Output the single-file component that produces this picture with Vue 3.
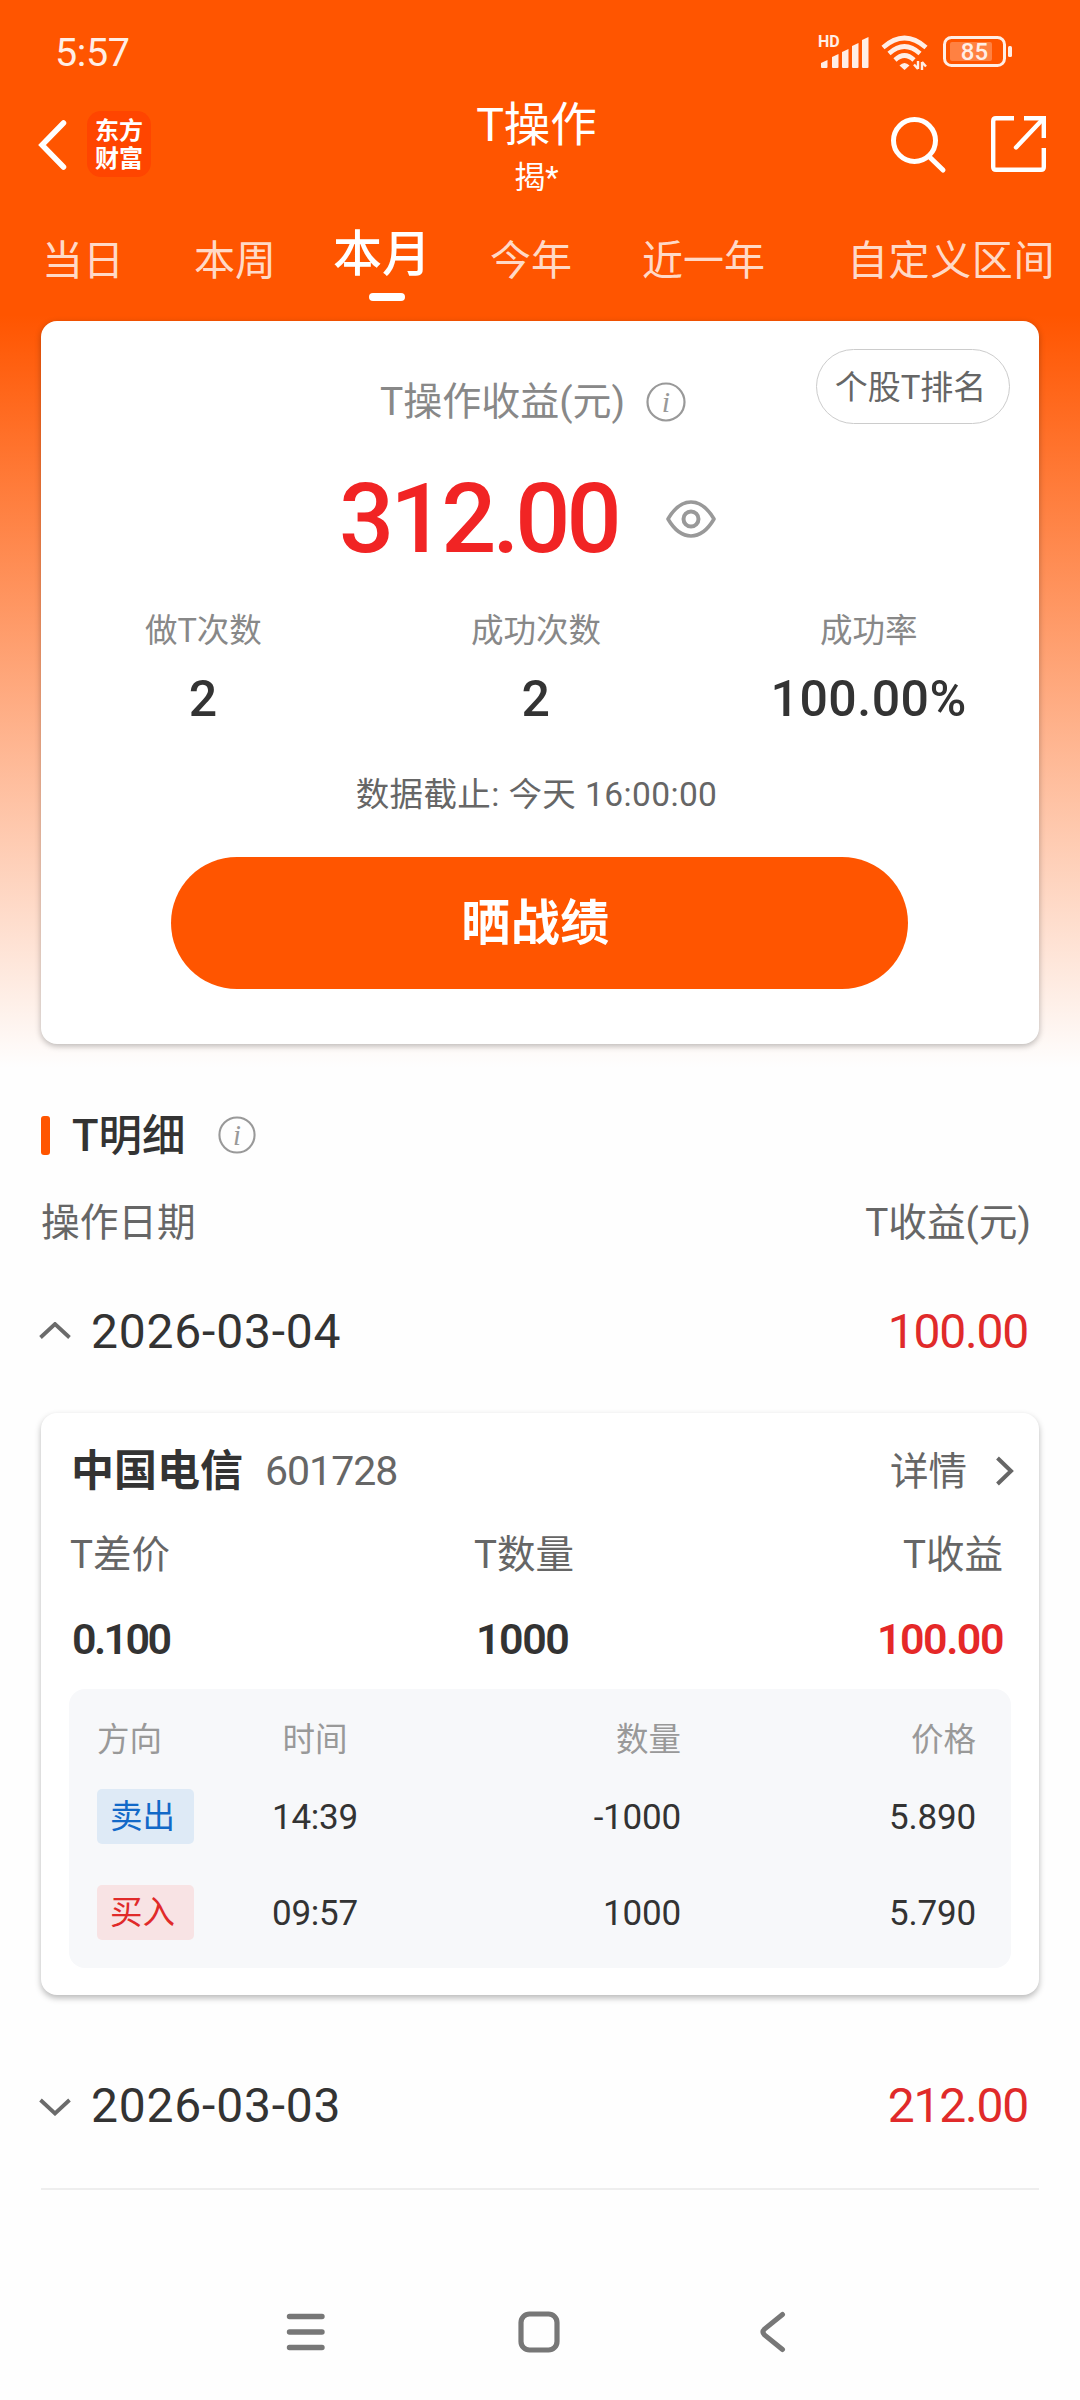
<script setup>
import { ref } from 'vue';

const tabs = [
  { id: 'day', label: '当日' },
  { id: 'week', label: '本周' },
  { id: 'month', label: '本月' },
  { id: 'year', label: '今年' },
  { id: 'last-year', label: '近一年' },
  { id: 'custom', label: '自定义区间' },
];
const activeTab = ref('month');

const stats = [
  { label: '做T次数', value: '2' },
  { label: '成功次数', value: '2' },
  { label: '成功率', value: '100.00%' },
];

// One entry per trading day; `stocks` is only rendered while the day is open.
const days = ref([
  {
    date: '2026-03-04',
    profit: '100.00',
    open: true,
    stocks: [
      {
        name: '中国电信',
        code: '601728',
        spread: '0.100',
        amount: '1000',
        profit: '100.00',
        trades: [
          { side: 'sell', label: '卖出', time: '14:39', amount: '-1000', price: '5.890' },
          { side: 'buy', label: '买入', time: '09:57', amount: '1000', price: '5.790' },
        ],
      },
    ],
  },
  { date: '2026-03-03', profit: '212.00', open: false, stocks: [] },
]);

// Left x, top y and height of each signal bar.
const bars = [
  [2, 24, 8],
  [13, 18, 14],
  [23, 13, 19],
  [33, 7, 25],
  [43, 1, 31],
];
</script>

<template>
  <div class="page">
    <header class="top">
      <div class="status">
        <span class="clock">5:57</span>
        <div class="status__icons">
          <div class="signal">
            <span class="signal__hd">HD</span>
            <svg width="52" height="34" viewBox="0 0 52 34">
              <path
                v-for="[x, y, h] in bars"
                :key="x"
                :d="`M${x} ${y + 3}l6.5 -3v${h - 1}q0 1 -1 1h-4.5q-1 0 -1 -1z`"
                fill="#ffeee6"
              />
            </svg>
          </div>
          <svg class="wifi" width="48" height="36" viewBox="0 0 48 36">
            <g fill="none" stroke="#ffeee6" stroke-width="4.6">
              <path d="M2 12.5Q23.5 -6.5 45 12.5" />
              <path d="M8 18.5Q23.5 4.5 39 18.5" />
              <path d="M14 25Q23.5 16 33 25" />
            </g>
            <path d="M18.5 30.5Q23.5 25.5 28.5 30.5L23.5 35z" fill="#ffeee6" />
            <path d="M37 26v8M33 29.5l4 4.5M41 35v-8M41 27l4 4.5" stroke="#ffeee6" stroke-width="2.4" fill="none" />
          </svg>
          <div class="battery">
            <svg width="70" height="32" viewBox="0 0 70 32">
              <rect x="1.5" y="1.5" width="60" height="28" rx="7" fill="none" stroke="#ffeee6" stroke-width="3" />
              <rect x="7" y="6" width="42" height="19" rx="2" fill="#ff8142" />
              <rect x="65" y="10" width="4" height="11" rx="1.5" fill="#ffeee6" />
            </svg>
            <span class="battery__level">85</span>
          </div>
        </div>
      </div>

      <div class="nav">
        <div class="nav__left">
          <svg width="30" height="50" viewBox="0 0 30 50">
            <path d="M25.5 3L4 25L25.5 47" fill="none" stroke="#fff" stroke-width="5.5" stroke-linecap="round" />
          </svg>
          <div class="logo"><span>东方</span><span>财富</span></div>
        </div>
        <div class="nav__title">
          <h1>T操作</h1>
          <p>揭*</p>
        </div>
        <div class="nav__right">
          <svg width="58" height="58" viewBox="0 0 58 58">
            <circle cx="24.5" cy="24.5" r="21" fill="none" stroke="#fff" stroke-width="5" />
            <path d="M39 40.5L53 54" stroke="#fff" stroke-width="5" stroke-linecap="round" />
          </svg>
          <svg width="56" height="56" viewBox="0 0 56 56">
            <g fill="none" stroke="#fff" stroke-width="4.4">
              <path d="M23 2.2H5Q2.2 2.2 2.2 5V51Q2.2 53.8 5 53.8H50Q52.8 53.8 52.8 51V32" />
              <path d="M33 2.2H52.8V22" />
              <path d="M52 3L25 31.5" stroke-linecap="round" />
            </g>
          </svg>
        </div>
      </div>

      <nav class="tabs">
        <button
          v-for="tab in tabs"
          :key="tab.id"
          class="tab"
          :class="['tab--' + tab.id, { 'tab--active': tab.id === activeTab }]"
          @click="activeTab = tab.id"
        >
          {{ tab.label }}
        </button>
      </nav>
    </header>

    <section class="hero">
      <div class="summary">
        <button class="rank">个股T排名</button>
        <div class="summary__label">
          <span>T操作收益(元)</span>
          <svg class="info" width="40" height="40" viewBox="0 0 40 40">
            <circle cx="20" cy="20" r="18.5" />
            <text x="20" y="30" text-anchor="middle">i</text>
          </svg>
        </div>
        <div class="summary__total">
          <strong>312.00</strong>
          <svg width="50" height="38" viewBox="0 0 50 38">
            <g fill="none" stroke="#999" stroke-width="3.6">
              <path d="M2 19Q12 2 25 2T48 19Q38 36 25 36T2 19Z" stroke-linejoin="round" />
              <circle cx="25" cy="19" r="7.5" stroke-width="4" />
            </g>
          </svg>
        </div>
        <div class="stats">
          <div v-for="stat in stats" :key="stat.label" class="stat">
            <span>{{ stat.label }}</span>
            <b>{{ stat.value }}</b>
          </div>
        </div>
        <p class="deadline">数据截止: 今天 16:00:00</p>
        <button class="share">晒战绩</button>
      </div>
    </section>

    <main class="detail">
      <div class="detail__head">
        <i class="mark"></i>
        <h2>T明细</h2>
        <svg class="info" width="38" height="38" viewBox="0 0 40 40">
          <circle cx="20" cy="20" r="18.5" />
          <text x="20" y="30" text-anchor="middle">i</text>
        </svg>
      </div>
      <div class="detail__cols">
        <span>操作日期</span>
        <span>T收益(元)</span>
      </div>

      <section v-for="day in days" :key="day.date" class="day" :class="{ 'day--open': day.open }">
        <div class="day__row" @click="day.open = !day.open">
          <svg class="day__arrow" width="32" height="20" viewBox="0 0 32 20">
            <path
              :d="day.open ? 'M1.5 15.5L16 2L30.5 15.5' : 'M1.5 4L16 17.5L30.5 4'"
              fill="none"
              stroke="#6b6b6b"
              stroke-width="3.8"
            />
          </svg>
          <span class="day__date">{{ day.date }}</span>
          <span class="day__profit">{{ day.profit }}</span>
        </div>

        <template v-if="day.open">
          <article v-for="stock in day.stocks" :key="stock.code" class="stock">
            <div class="stock__head">
              <h3>{{ stock.name }}</h3>
              <span class="stock__code">{{ stock.code }}</span>
              <span class="stock__more">详情</span>
              <svg width="20" height="30" viewBox="0 0 20 30">
                <path d="M2.5 2L16 15L2.5 28" fill="none" stroke="#666" stroke-width="4" />
              </svg>
            </div>
            <div class="stock__labels">
              <span>T差价</span>
              <span>T数量</span>
              <span>T收益</span>
            </div>
            <div class="stock__values">
              <b class="spread">{{ stock.spread }}</b>
              <b>{{ stock.amount }}</b>
              <b class="up">{{ stock.profit }}</b>
            </div>
            <div class="trades">
              <div class="trade trade--head">
                <span>方向</span>
                <span class="trade__time">时间</span>
                <span class="trade__num">数量</span>
                <span class="trade__num">价格</span>
              </div>
              <div v-for="trade in stock.trades" :key="trade.time" class="trade">
                <span class="tag" :class="'tag--' + trade.side">{{ trade.label }}</span>
                <span class="trade__time">{{ trade.time }}</span>
                <span class="trade__num">{{ trade.amount }}</span>
                <span class="trade__num">{{ trade.price }}</span>
              </div>
            </div>
          </article>
        </template>
      </section>
    </main>

    <footer class="sysnav">
      <svg width="42" height="42" viewBox="0 0 42 42">
        <path d="M4.5 5.5H37M4.5 21H37M4.5 36.5H37" stroke="#777" stroke-width="5.4" stroke-linecap="round" />
      </svg>
      <svg width="42" height="42" viewBox="0 0 42 42">
        <rect x="3" y="3" width="36" height="36" rx="8.5" fill="none" stroke="#777" stroke-width="5.2" />
      </svg>
      <svg width="42" height="42" viewBox="0 0 42 42">
        <path d="M31.5 3.5L13.5 18Q10.5 21 13.5 24L31.5 38.5" fill="none" stroke="#777" stroke-width="5" stroke-linecap="round" />
      </svg>
    </footer>
  </div>
</template>

<style>
body {
  background: #fefefe;
}
</style>

<style scoped>
.page {
  display: flex;
  flex-direction: column;
  width: 1080px;
  height: 2400px;
  overflow: hidden;
  background: #fefefe;
  color: #333;
  font-family: Roboto, 'Noto Sans CJK SC', sans-serif;
  line-height: 1.2;
}

h1,
h2,
h3,
p {
  margin: 0;
  font-weight: 400;
}

button {
  padding: 0;
  border: 0;
  background: none;
  color: inherit;
  font: inherit;
}

svg {
  display: block;
  flex: none;
}

/* Header */
.top {
  height: 315px;
  background: #ff5500;
  color: #fff;
}

.status {
  display: flex;
  justify-content: space-between;
  height: 104px;
  padding: 0 67px 0 55px;
}

.clock {
  color: #ffeee6;
  font-size: 39.5px;
  letter-spacing: -0.4px;
  line-height: 106px;
}

.status__icons {
  display: flex;
  color: #ffeee6;
}

.signal {
  position: relative;
  margin-top: 36px;
}

.signal__hd {
  position: absolute;
  top: -4px;
  left: -1px;
  font: 700 16px/20px Roboto, sans-serif;
}

.wifi {
  margin: 35px 0 0 10px;
}

.battery {
  position: relative;
  margin: 36px 0 0 14px;
}

.battery__level {
  position: absolute;
  top: 0;
  left: 0;
  width: 63px;
  font-size: 24px;
  font-weight: 500;
  line-height: 32px;
  text-align: center;
}

.nav {
  display: grid;
  grid-template-columns: 1fr auto 1fr;
  height: 106px;
}

.nav__left {
  display: flex;
  align-items: flex-start;
  padding: 7px 0 0 38px;
}

.nav__left svg {
  margin-top: 9px;
}

.logo {
  display: flex;
  flex-direction: column;
  justify-content: center;
  box-sizing: border-box;
  width: 64px;
  height: 66px;
  margin-left: 19px;
  padding-top: 2px;
  border-radius: 14px;
  background: #ff4500;
  font-size: 24px;
  font-weight: 700;
  line-height: 28px;
  text-align: center;
}

.nav__title {
  padding-right: 7px;
  text-align: center;
}

.nav__title h1 {
  height: 44px;
  font-size: 46.5px;
  line-height: 42px;
}

.nav__title p {
  height: 40px;
  margin-top: 10px;
  font-size: 31px;
  line-height: 40px;
}

.nav__right {
  display: flex;
  justify-content: flex-end;
  gap: 43px;
  height: 58px;
  padding: 12px 33px 0 0;
}

.tabs {
  display: flex;
  height: 105px;
  padding-left: 42px;
}

.tab {
  height: 103px;
  margin-right: 70px;
  color: rgba(255, 255, 255, 0.8);
  font-size: 41px;
  white-space: nowrap;
}

.tab--week {
  margin-right: 57px;
}

.tab--active {
  position: relative;
  height: 90px;
  margin-right: 59px;
  color: #fff;
  font-size: 49px;
  font-weight: 500;
}

.tab--active::after {
  content: '';
  position: absolute;
  left: 36px;
  bottom: -1px;
  width: 36px;
  height: 8px;
  border-radius: 4px;
  background: #fff;
}

.tab--last-year {
  margin-right: 82px;
}

.tab--custom {
  margin-right: 0;
  letter-spacing: 0.6px;
}

/* Summary card */
.hero {
  box-sizing: border-box;
  height: 760px;
  padding: 6px 41px 0;
  background: linear-gradient(#ff5500, #fefefe 99%);
}

.summary {
  position: relative;
  height: 723px;
  border-radius: 16px;
  background: #fff;
  box-shadow: 0 2px 6px rgba(0, 0, 0, 0.28);
}

.rank {
  position: absolute;
  top: 28px;
  right: 29px;
  width: 194px;
  height: 75px;
  padding: 3px 5px 0 0;
  border: 1.5px solid #ccc;
  border-radius: 38px;
  color: #666;
  font-size: 33px;
}

.summary__label {
  display: flex;
  align-items: center;
  gap: 21px;
  height: 52px;
  padding: 55px 0 0 339px;
  color: #888;
  font-size: 39px;
  line-height: 54px;
}

.info circle {
  fill: none;
  stroke: #999;
  stroke-width: 2.2;
}

.info text {
  fill: #999;
  font: italic 30px 'Liberation Serif', serif;
}

.summary__total {
  display: flex;
  align-items: center;
  gap: 47px;
  height: 110px;
  margin-top: 36px;
  padding-left: 298px;
}

.summary__total strong {
  width: 280px;
  color: #f12424;
  font-size: 97px;
  font-weight: 500;
  letter-spacing: -4px;
  line-height: 110px;
  white-space: nowrap;
}

.stats {
  display: grid;
  grid-template-columns: repeat(3, 1fr);
  margin: 32px 4px 0 -4px;
  text-align: center;
}

.stat span {
  display: block;
  height: 50px;
  color: #888;
  font-size: 32.5px;
  line-height: 50px;
}

.stat b {
  display: block;
  height: 60px;
  margin-top: 13px;
  font-size: 50px;
  font-weight: 500;
  letter-spacing: 0.5px;
  line-height: 61px;
}

.deadline {
  height: 50px;
  margin-top: 40px;
  padding-right: 7px;
  color: #666;
  font-size: 33.5px;
  letter-spacing: 0.4px;
  line-height: 52px;
  text-align: center;
}

.share {
  display: block;
  width: 737px;
  height: 132px;
  margin: 38px 0 0 130px;
  padding: 3px 8px 0 0;
  border-radius: 66px;
  background: #ff5500;
  color: #fff;
  font-size: 49px;
  font-weight: 700;
  letter-spacing: 0.5px;
}

/* Detail list */
.detail {
  flex: 1;
  padding: 0 41px;
}

.detail__head {
  display: flex;
  align-items: center;
  height: 60px;
  margin-top: 30px;
}

.mark {
  width: 9px;
  height: 39px;
  border-radius: 3px;
  background: #ff5500;
}

.detail__head h2 {
  margin: 0 32px 0 22px;
  padding-top: 4px;
  font-size: 43.5px;
  font-weight: 500;
}

.detail__cols {
  display: flex;
  justify-content: space-between;
  height: 56px;
  margin-top: 29px;
  padding-right: 8px;
  color: #666;
  font-size: 38.7px;
  line-height: 58px;
}

.day__row {
  display: flex;
  align-items: center;
  height: 163px;
  padding-right: 11px;
}

.day:not(.day--open) {
  border-bottom: 2px solid #eee;
}

.day:not(.day--open) .day__row {
  height: 165px;
}

.day__arrow {
  margin-left: -2px;
}

.day__date {
  flex: 1;
  margin-left: 20px;
  font-size: 48px;
  letter-spacing: 0.8px;
}

.day__profit {
  color: #e02a2a;
  font-size: 48px;
  letter-spacing: -1.2px;
}

.stock {
  height: 582px;
  margin-bottom: 28px;
  border-radius: 16px;
  background: #fff;
  box-shadow: 0 3px 6px rgba(0, 0, 0, 0.28);
}

.stock__head {
  display: flex;
  align-items: center;
  height: 60px;
  padding: 28px 24px 0 30px;
}

.stock__head h3 {
  padding-top: 2px;
  font-size: 43px;
  font-weight: 700;
}

.stock__code {
  flex: 1;
  margin-left: 22px;
  padding-top: 2px;
  color: #666;
  font-size: 41px;
  letter-spacing: -1px;
}

.stock__more {
  margin-right: 28px;
  padding-top: 2px;
  color: #666;
  font-size: 38.5px;
}

.stock__labels,
.stock__values {
  display: grid;
  grid-template-columns: 404px 110px 1fr;
  height: 60px;
  padding: 0 36px 0 29px;
  line-height: 61px;
}

.stock__labels {
  margin-top: 23px;
  color: #666;
  font-size: 38.5px;
}

.stock__values {
  margin-top: 25px;
  padding-left: 31px;
  font-size: 43px;
  letter-spacing: -1.5px;
}

.stock__values b {
  font-weight: 600;
}

.stock__values .spread {
  letter-spacing: -2.6px;
}

.stock__labels :last-child,
.stock__values :last-child {
  text-align: right;
}

.stock__values .up {
  color: #e52828;
}

.trades {
  box-sizing: border-box;
  height: 279px;
  margin: 20px 28px 0;
  padding: 26px 35px 0 28px;
  border-radius: 16px;
  background: #f7f8fa;
}

.trade {
  display: grid;
  grid-template-columns: 131px 174px 279px 1fr;
  align-items: center;
  height: 96px;
  font-size: 35px;
  letter-spacing: -0.2px;
}

.trade span:not(.tag) {
  padding-top: 3px;
}

.trade--head {
  height: 48px;
  margin-bottom: 5px;
  color: #999;
  font-size: 32.5px;
  letter-spacing: 0;
}

.trade__time {
  text-align: center;
}

.trade__num {
  text-align: right;
}

.tag {
  box-sizing: border-box;
  width: 97px;
  height: 55px;
  padding-left: 13px;
  border-radius: 5px;
  font-size: 32.5px;
  letter-spacing: 0;
  line-height: 56px;
}

.tag--sell {
  background: #deeaf6;
  color: #1269c8;
}

.tag--buy {
  background: #f8e3e4;
  color: #e02a2a;
}

/* System navigation */
.sysnav {
  display: flex;
  justify-content: space-between;
  height: 89px;
  padding: 0 287px 0 285px;
}
</style>
